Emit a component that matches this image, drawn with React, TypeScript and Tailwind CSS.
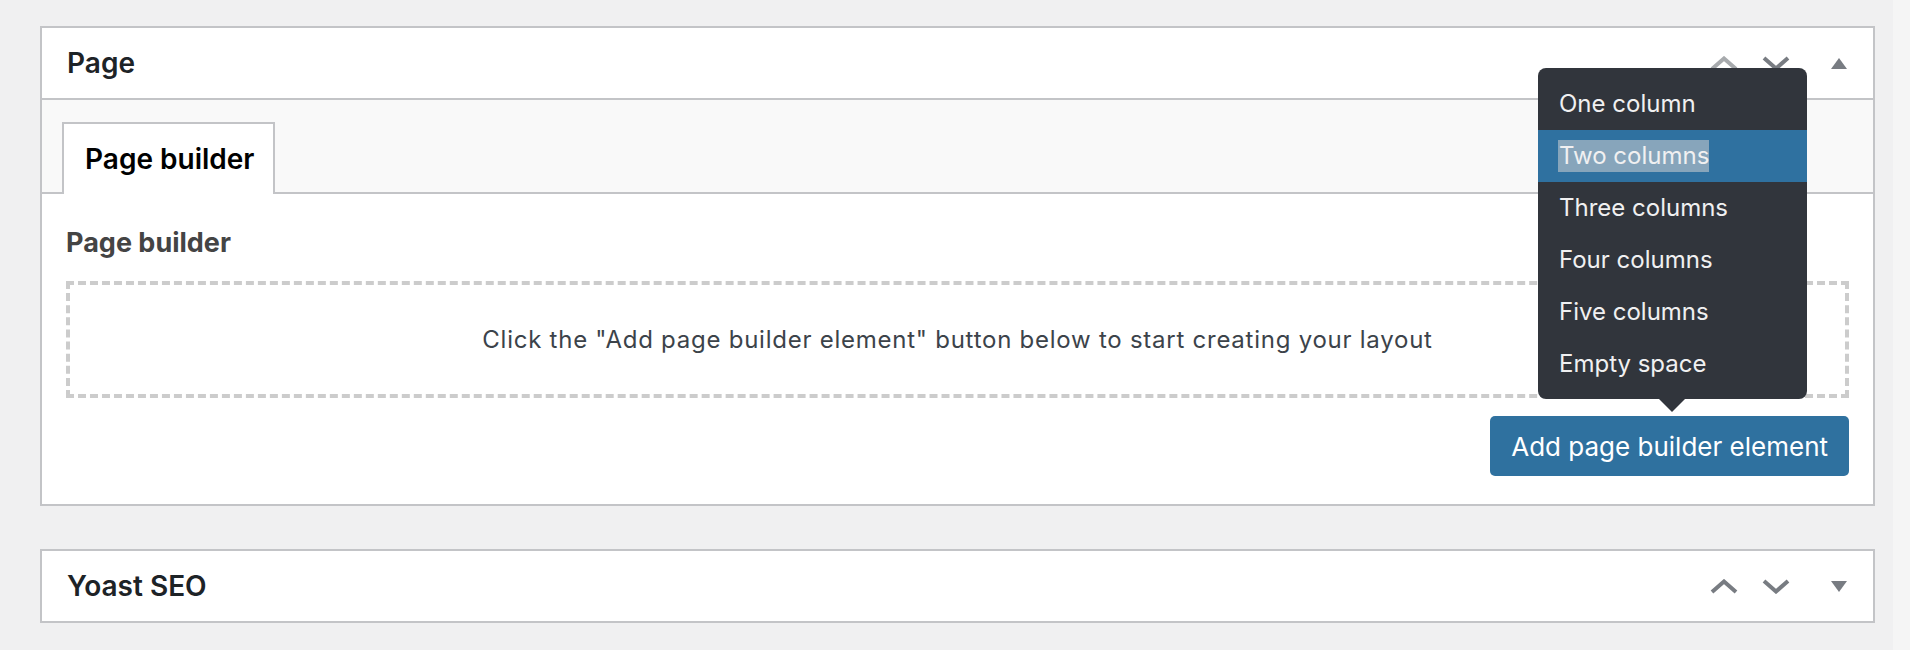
import React from 'react';

function Chevron({ dir, light }: { dir: 'up' | 'down'; light?: boolean }) {
  const points = dir === 'up' ? '2,13 14,2.5 26,13' : '2,2 14,12.5 26,2';
  return (
    <svg width="28" height="15" viewBox="0 0 28 15" className="block">
      <polyline
        points={points}
        fill="none"
        stroke={light ? '#a7aaad' : '#787c82'}
        strokeWidth="4"
      />
    </svg>
  );
}

function Toggle({ open }: { open: boolean }) {
  return (
    <svg width="16" height="11" viewBox="0 0 16 11" className="block">
      <polygon points={open ? '0,11 8,0 16,11' : '0,0 16,0 8,11'} fill="#787c82" />
    </svg>
  );
}

function BoxHeader({ title, open, firstBox }: { title: string; open: boolean; firstBox?: boolean }) {
  return (
    <header className="flex h-[70px] items-center pl-[25px] pr-[26px]">
      <h2 className="flex-1 text-[28px] font-semibold text-[#1d2327]">{title}</h2>
      <div className="flex items-center">
        <Chevron dir="up" light={firstBox} />
        <div className="ml-[24px]">
          <Chevron dir="down" />
        </div>
        <div className="ml-[41px]">
          <Toggle open={open} />
        </div>
      </div>
    </header>
  );
}

const menuItems = ['One column', 'Two columns', 'Three columns', 'Four columns', 'Five columns', 'Empty space'];

export default function App() {
  return (
    <div className="relative flex h-[650px] overflow-hidden bg-[#f0f0f1] font-['Inter','Noto_Sans',sans-serif]">
      <div className="flex-1 pl-[40px] pr-[18px] pt-[26px]">
        <section className="border-2 border-[#c3c4c7] bg-white">
          <div className="border-b-2 border-[#c3c4c7]">
            <BoxHeader title="Page" open firstBox />
          </div>
          <div className="flex border-b-2 border-[#c3c4c7] bg-[#f9f9f9] pl-[20px] pt-[22px]">
            <div className="-mb-[2px] flex h-[72px] items-center border-2 border-b-0 border-[#c3c4c7] bg-white pl-[21px] pr-[19px] text-[28px] font-semibold text-black">
              Page builder
            </div>
          </div>
          <div className="px-[24px] pb-[28px] pt-[31px]">
            <h3 className="text-[27px] font-bold leading-[36px] text-[#444]">Page builder</h3>
            <div className="mt-[20px] flex h-[117px] items-center justify-center border-4 border-dashed border-[#cccccc] text-[24px] tracking-[0.75px] text-[#3c434a]">
              Click the "Add page builder element" button below to start creating your layout
            </div>
            <div className="mt-[18px] flex justify-end">
              <button className="h-[60px] rounded-[5px] bg-[#2f719f] px-[21px] text-[26px] text-white">
                Add page builder element
              </button>
            </div>
          </div>
        </section>

        <section className="mt-[43px] border-2 border-[#c3c4c7] bg-white">
          <BoxHeader title="Yoast SEO" open={false} />
        </section>
      </div>
      <div className="w-[17px] bg-[#f5f5f5]" />

      <div className="absolute left-[1538px] top-[68px] w-[269px] rounded-[8px] bg-[#31353c] pb-[9px] pt-[10px]">
        {menuItems.map((item) => (
          <div
            key={item}
            className={
              item === 'Two columns'
                ? 'flex h-[52px] items-center bg-[#2f71a0] px-[20px] text-[24px] text-[#f0f0f1]'
                : 'flex h-[52px] items-center px-[21px] text-[24px] text-[#f0f0f1]'
            }
          >
            {item === 'Two columns' ? (
              <span className="bg-[#87a5bb] pl-[1px] leading-[32px]">{item}</span>
            ) : (
              item
            )}
          </div>
        ))}
        <svg width="26" height="13" viewBox="0 0 26 13" className="absolute left-[121px] top-full block">
          <polygon points="0,0 26,0 13,13" fill="#31353c" />
        </svg>
      </div>
    </div>
  );
}
